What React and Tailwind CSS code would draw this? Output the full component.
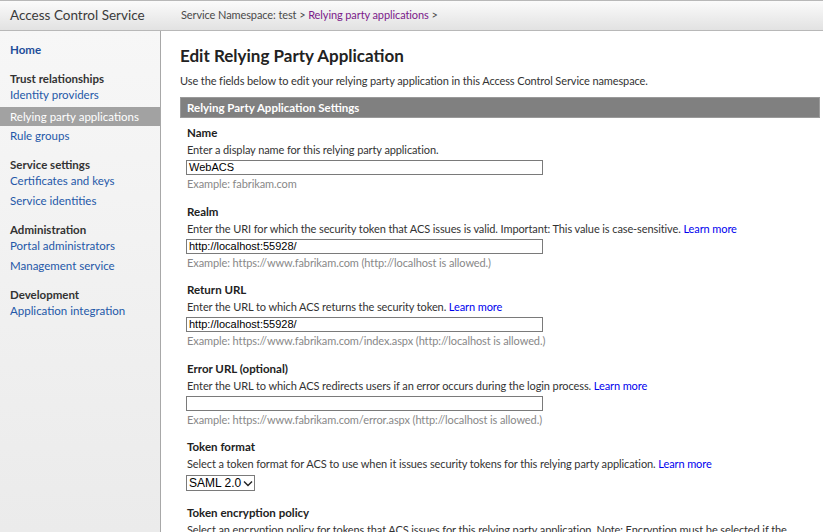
import React from "react";

const font = { fontFamily: 'Lato, "Noto Sans", sans-serif' };
const arial = { fontFamily: '"Liberation Sans", Arial, sans-serif' };

const navGroups = [
  { title: null, items: [{ label: "Home", home: true }] },
  {
    title: "Trust relationships",
    items: [
      { label: "Identity providers" },
      { label: "Relying party applications", active: true },
      { label: "Rule groups" },
    ],
  },
  {
    title: "Service settings",
    items: [{ label: "Certificates and keys" }, { label: "Service identities" }],
  },
  {
    title: "Administration",
    items: [{ label: "Portal administrators" }, { label: "Management service" }],
  },
  { title: "Development", items: [{ label: "Application integration" }] },
];

const fields = [
  {
    label: "Name",
    desc: "Enter a display name for this relying party application.",
    value: "WebACS",
    example: "Example: fabrikam.com",
  },
  {
    label: "Realm",
    desc: "Enter the URI for which the security token that ACS issues is valid. Important: This value is case-sensitive.",
    learn: true,
    value: "http://localhost:55928/",
    example: "Example: https://www.fabrikam.com (http://localhost is allowed.)",
  },
  {
    label: "Return URL",
    desc: "Enter the URL to which ACS returns the security token.",
    learn: true,
    value: "http://localhost:55928/",
    example: "Example: https://www.fabrikam.com/index.aspx (http://localhost is allowed.)",
  },
  {
    label: "Error URL (optional)",
    desc: "Enter the URL to which ACS redirects users if an error occurs during the login process.",
    learn: true,
    value: "",
    example: "Example: https://www.fabrikam.com/error.aspx (http://localhost is allowed.)",
  },
];

const LearnMore = () => <span className="text-[#0000ee]"> Learn more</span>;

// regular body copy is set a touch narrower than the bold labels
const body = "text-[11px] tracking-[-0.1px]";

const Field = ({ f }) => (
  <div className="mb-[10.5px]">
    <div className="h-[17px] leading-[17px] font-bold text-[#222]">{f.label}</div>
    <div className={`h-[17px] leading-[17px] text-[#333] whitespace-nowrap ${body}`}>
      {f.desc}
      {f.learn && <LearnMore />}
    </div>
    <div
      className="mt-[2px] ml-[-1px] w-[357px] h-[15px] border border-[#7a7a7a] bg-white px-[2px] text-[11px] leading-[13px] text-black"
      style={arial}
    >
      {f.value}
    </div>
    <div className={`h-[17px] leading-[17px] text-[#888] whitespace-nowrap ${body}`}>{f.example}</div>
  </div>
);

export default function App() {
  return (
    <div className="w-[823px] h-[532px] overflow-hidden bg-white text-[11.5px]" style={font}>
      {/* Header */}
      <div className="h-[31px] flex items-center border-t border-b border-[#b8b8b8] bg-gradient-to-b from-[#fbfbfb] to-[#e2e2e2]">
        <div className="w-[181px] pl-[10px] text-[13.5px] text-[#3a3a3a]">Access Control Service</div>
        <div className="text-[11px] tracking-[-0.1px] text-[#4a4a4a]">
          Service Namespace: test {">"}{" "}
          <span className="text-[#7b1a8a]">Relying party applications</span> {">"}
        </div>
      </div>

      <div className="flex h-[501px]">
        {/* Sidebar */}
        <div className="w-[161px] shrink-0 border-r border-[#a8a8a8] bg-gradient-to-b from-[#f7f7f7] to-[#ebebeb] pt-[9px]">
          {navGroups.map((g, i) => (
            <div key={i} className="mb-[10px]">
              {g.title && (
                <div className="h-[17px] leading-[17px] mb-[-2px] px-[10px] font-bold text-[#333]">
                  {g.title}
                </div>
              )}
              {g.items.map((it, j) => (
                <div
                  key={j}
                  className={`px-[10px] flex items-center ${
                    it.home
                      ? "h-[20px] font-bold text-[#1e4e9a]"
                      : it.active
                      ? "h-[19px] mt-[2px] bg-[#a2a2a2] text-white"
                      : "h-[20px] text-[#2458a8]"
                  }`}
                >
                  {it.label}
                </div>
              ))}
            </div>
          ))}
        </div>

        {/* Main */}
        <div className="flex-1 pl-[19px] pr-[3px] pt-[14px]">
          <h1 className="text-[17px] font-bold text-[#222] leading-[22px]">
            Edit Relying Party Application
          </h1>
          <p className={`mt-[5px] h-[17px] leading-[17px] text-[#333] ${body}`}>
            Use the fields below to edit your relying party application in this Access Control Service namespace.
          </p>
          <div className="mt-[8px] h-[21px] flex items-center bg-[#808080] border border-[#9a9a9a] px-[6px] text-white font-bold">
            Relying Party Application Settings
          </div>

          <div className="pl-[7px] pt-[6px]">
            {fields.map((f) => (
              <Field key={f.label} f={f} />
            ))}

            <div className="mb-[13px]">
              <div className="h-[17px] leading-[17px] font-bold text-[#222]">Token format</div>
              <div className={`h-[17px] leading-[17px] text-[#333] whitespace-nowrap ${body}`}>
                Select a token format for ACS to use when it issues security tokens for this relying party application.
                <LearnMore />
              </div>
              <div
                className="mt-[3px] ml-[-1px] w-[69px] h-[16px] flex items-center justify-between border border-[#7a7a7a] bg-white pl-[2px] pr-[1px] text-[12px] text-black whitespace-nowrap"
                style={arial}
              >
                <span>SAML 2.0</span>
                <svg width="10" height="7" viewBox="0 0 10 7">
                  <path d="M1 1.5 L5 5.5 L9 1.5" fill="none" stroke="#222" strokeWidth="1.4" />
                </svg>
              </div>
            </div>

            <div>
              <div className="h-[17px] leading-[17px] font-bold text-[#222]">Token encryption policy</div>
              <div className={`h-[17px] leading-[17px] text-[#333] whitespace-nowrap ${body}`}>
                Select an encryption policy for tokens that ACS issues for this relying party application. Note: Encryption must be selected if the
              </div>
            </div>
          </div>
        </div>
      </div>
    </div>
  );
}
